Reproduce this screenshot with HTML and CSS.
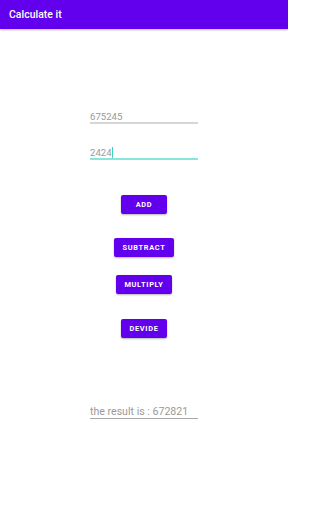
FILE: index.html
```html
<!DOCTYPE html>
<html>
<head>
<meta charset="utf-8">
<link rel="stylesheet" href="styles.css">
</head>
<body>
<div class="screen">
<header class="appbar"><span class="title">Calculate it</span></header>
<main class="content">
  <div class="field field-first"><span class="value">675245</span></div>
  <div class="field field-focused"><span class="value">2424</span><span class="cursor"></span></div>
  <button class="btn btn-add">ADD</button>
  <button class="btn btn-sub">SUBTRACT</button>
  <button class="btn btn-mul">MULTIPLY</button>
  <button class="btn btn-div">DEVIDE</button>
  <div class="field field-result"><span class="value">the result is : 672821</span></div>
</main>
</div>
</body>
</html>
```
FILE: styles.css
```css
html, body {
  margin: 0;
  padding: 0;
  background: #ffffff;
  font-family: Roboto, "Liberation Sans", sans-serif;
}
.screen {
  width: 288px;
  height: 512px;
  overflow: hidden;
}
.appbar {
  height: 29px;
  background: #6200ee;
  display: flex;
  align-items: center;
  padding-left: 9px;
  box-shadow: 0 1px 2px rgba(0,0,0,0.28);
  position: relative;
  z-index: 1;
}
.title {
  color: #ffffff;
  font-weight: 500;
  font-size: 10.4px;
  letter-spacing: 0.05px;
}
.content {
  display: flex;
  flex-direction: column;
  align-items: center;
}
.field {
  width: 108px;
  box-sizing: border-box;
  font-size: 9.6px;
  line-height: 11px;
  color: #9a9a9a;
  display: flex;
  align-items: center;
  border-bottom: 2px solid #d6d6d6;
}
.field-first {
  margin-top: 82px;
}
.field-focused {
  margin-top: 23px;
  border-bottom-color: #86e6da;
}
.cursor {
  display: inline-block;
  width: 1px;
  height: 11px;
  background: #3fd3c2;
  margin-left: 0.5px;
}
.field-result {
  margin-top: 67px;
  border-bottom: 1px solid #a8a8a8;
  font-size: 10.6px;
  line-height: 13px;
}
.btn {
  height: 19px;
  min-width: 46px;
  padding: 0 8px;
  border: none;
  border-radius: 2px;
  background: #6200ee;
  color: #ffffff;
  font-family: Roboto, "Liberation Sans", sans-serif;
  font-weight: 700;
  font-size: 7.4px;
  letter-spacing: 0.7px;
  box-shadow: 0 1px 2px rgba(0,0,0,0.3);
}
.btn-add { margin-top: 35px; }
.btn-sub { margin-top: 24px; }
.btn-mul { margin-top: 18px; }
.btn-div { margin-top: 25px; }
```
